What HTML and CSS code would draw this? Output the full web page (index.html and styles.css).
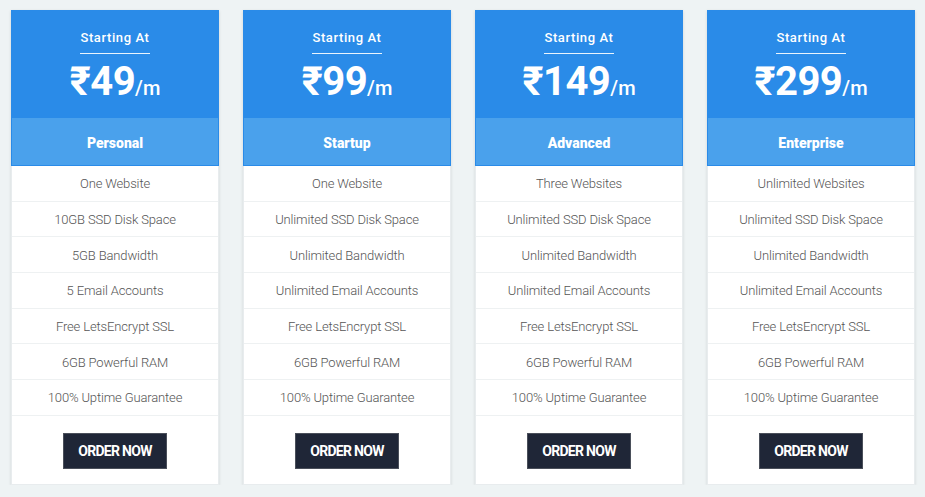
FILE: index.html
```html
<!DOCTYPE html>
<html>
<head>
<meta charset="utf-8">
<link rel="stylesheet" href="styles.css">
</head>
<body>
<div class="plans">
  <div class="card">
    <div class="head">
      <div class="starting">Starting At</div>
      <div class="price">₹49<span class="per">/m</span></div>
    </div>
    <div class="name">Personal</div>
    <ul class="features">
      <li>One Website</li>
      <li>10GB SSD Disk Space</li>
      <li>5GB Bandwidth</li>
      <li>5 Email Accounts</li>
      <li>Free LetsEncrypt SSL</li>
      <li>6GB Powerful RAM</li>
      <li>100% Uptime Guarantee</li>
    </ul>
    <div class="foot"><a class="btn">ORDER NOW</a></div>
  </div>
  <div class="card">
    <div class="head">
      <div class="starting">Starting At</div>
      <div class="price">₹99<span class="per">/m</span></div>
    </div>
    <div class="name">Startup</div>
    <ul class="features">
      <li>One Website</li>
      <li>Unlimited SSD Disk Space</li>
      <li>Unlimited Bandwidth</li>
      <li>Unlimited Email Accounts</li>
      <li>Free LetsEncrypt SSL</li>
      <li>6GB Powerful RAM</li>
      <li>100% Uptime Guarantee</li>
    </ul>
    <div class="foot"><a class="btn">ORDER NOW</a></div>
  </div>
  <div class="card">
    <div class="head">
      <div class="starting">Starting At</div>
      <div class="price">₹149<span class="per">/m</span></div>
    </div>
    <div class="name">Advanced</div>
    <ul class="features">
      <li>Three Websites</li>
      <li>Unlimited SSD Disk Space</li>
      <li>Unlimited Bandwidth</li>
      <li>Unlimited Email Accounts</li>
      <li>Free LetsEncrypt SSL</li>
      <li>6GB Powerful RAM</li>
      <li>100% Uptime Guarantee</li>
    </ul>
    <div class="foot"><a class="btn">ORDER NOW</a></div>
  </div>
  <div class="card">
    <div class="head">
      <div class="starting">Starting At</div>
      <div class="price">₹299<span class="per">/m</span></div>
    </div>
    <div class="name">Enterprise</div>
    <ul class="features">
      <li>Unlimited Websites</li>
      <li>Unlimited SSD Disk Space</li>
      <li>Unlimited Bandwidth</li>
      <li>Unlimited Email Accounts</li>
      <li>Free LetsEncrypt SSL</li>
      <li>6GB Powerful RAM</li>
      <li>100% Uptime Guarantee</li>
    </ul>
    <div class="foot"><a class="btn">ORDER NOW</a></div>
  </div>
</div>
</body>
</html>
```
FILE: styles.css
```css
html, body {
  margin: 0;
  padding: 0;
  background: #eef3f4;
  font-family: Roboto, "Liberation Sans", sans-serif;
}
.plans {
  display: flex;
  gap: 24px;
  padding: 10px 0 0 11px;
}
.card {
  width: 208px;
  background: #fff;
  box-shadow: 0 1px 3px rgba(0,0,0,0.12);
  display: flex;
  flex-direction: column;
}
.head {
  background: #2a8be8;
  height: 108px;
  box-sizing: border-box;
  padding-top: 20px;
  display: flex;
  flex-direction: column;
  align-items: center;
  color: #fff;
}
.starting {
  font-size: 13px;
  font-weight: 500;
  letter-spacing: 0.6px;
  line-height: 16px;
  padding: 0 0 7px 0;
  border-bottom: 1px solid rgba(255,255,255,0.9);
  text-align: center;
  white-space: nowrap;
}
.price {
  font-size: 40px;
  font-weight: 700;
  line-height: 46px;
  margin-top: 5px;
  letter-spacing: -0.5px;
}
.per {
  font-size: 20px;
  font-weight: 500;
  margin-left: 0;
  letter-spacing: 0;
}
.name {
  background: #4aa1ec;
  border: 1px solid #2a8be8;
  border-top: 0;
  height: 48px;
  box-sizing: border-box;
  padding-top: 2px;
  display: flex;
  align-items: center;
  justify-content: center;
  color: #fff;
  font-size: 14px;
  font-weight: 900;
}
.features {
  list-style: none;
  margin: 0;
  padding: 0;
  border-left: 1px solid #e8ecee;
  border-right: 1px solid #e8ecee;
}
.features li {
  height: 35.7px;
  box-sizing: border-box;
  padding-top: 1px;
  border-bottom: 1px solid #eef1f2;
  display: flex;
  align-items: center;
  justify-content: center;
  font-size: 13px;
  font-weight: 300;
  letter-spacing: -0.15px;
  color: #555;
}
.foot {
  height: 69px;
  box-sizing: border-box;
  padding-top: 17px;
  display: flex;
  justify-content: center;
  align-items: flex-start;
  border: 1px solid #e8ecee;
  border-top: 0;
}
.btn {
  width: 104px;
  height: 36px;
  box-sizing: border-box;
  background: #1f2637;
  border: 1px solid #4a4f5a;
  color: #fff;
  font-size: 14px;
  font-weight: 700;
  letter-spacing: -0.7px;
  display: flex;
  align-items: center;
  justify-content: center;
}
```
